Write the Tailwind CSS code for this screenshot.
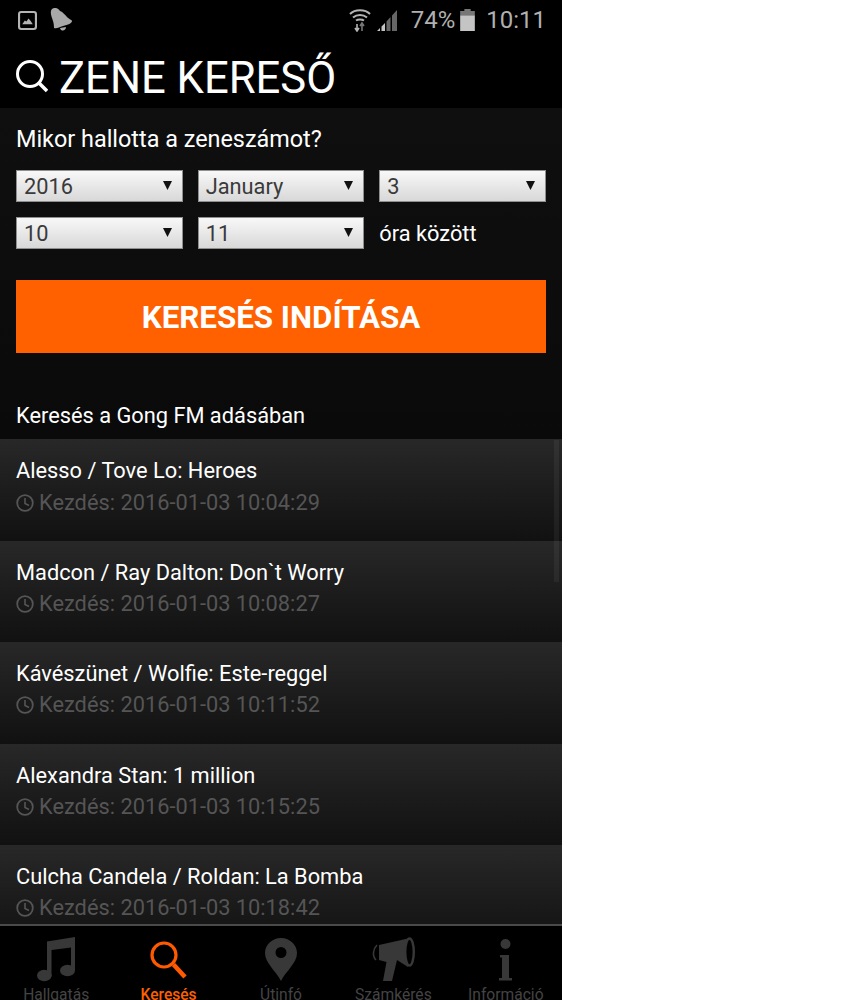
<!DOCTYPE html>
<html lang="en">
<head>
    <meta charset="UTF-8">
    <title>Zene kereső</title>
    <script src="https://cdn.jsdelivr.net/npm/@tailwindcss/browser@4"></script>
</head>
<body class="bg-white font-['Roboto',sans-serif]">
<div class="w-[562px] h-[1000px] bg-black flex flex-col overflow-hidden relative">

    <!-- Status bar -->
    <div class="h-[40px] flex items-center pl-[18px] pr-[16px] text-[#b0b0b0] shrink-0">
        <svg class="w-[19px] h-[19px]" viewBox="0 0 18 18"><rect x="1" y="1" width="16" height="16" rx="2" fill="none" stroke="#b4b4b4" stroke-width="2"/><path d="M4 12.5 L6.5 9 L8 10 L10 7 L12 9.5 L14 12.5 Z" fill="#b4b4b4"/></svg>
        <svg class="w-[24px] h-[24px] ml-[12px]" viewBox="0 0 24 24"><path d="M3 1 C6 -1 9 0 11 3 C14 4 16 7 18 9 C20 11 23 12 23 13 C23 15 19 17 14 18 C10 19 8 21 5 20 C5 15 4 13 3 10 C2 7 1 3 3 1 Z M11 20 C13 20 15 19 17 19 C17 23 12 24 11 20 Z" fill="#a8a8a8"/></svg>
        <div class="flex-1"></div>
        <svg class="w-[22px] h-[24px]" viewBox="0 0 22 24"><path d="M1 6 C6 1 16 1 21 6 M4 9.5 C8 6 14 6 18 9.5 M7 12.5 C9 11 13 11 15 12.5" fill="none" stroke="#b4b4b4" stroke-width="2"/><path d="M8 16 V22 M6 20 L8 23 L10 20" fill="none" stroke="#b4b4b4" stroke-width="1.6"/><path d="M13 23 V16 M11 18 L13 15 L15 18" fill="none" stroke="#777" stroke-width="1.6"/></svg>
        <svg class="w-[20px] h-[21px] ml-[6px] mt-[1px]" viewBox="0 0 20 21"><path d="M0 21 L3 18 V21 Z M4.500 21 V16.500 L8 13 V21 Z" fill="#c4c4c4"/><path d="M9.500 21 V11.500 L13.500 7 V21 Z M15 21 V5.500 L20 0 V21 Z" fill="#666"/></svg>
        <span class="ml-[14px] text-[24px] leading-none">74%</span>
        <svg class="w-[15px] h-[22px] ml-[5px]" viewBox="0 0 14 21"><path d="M4 0 H10 V2 H14 V6 H0 V2 H4 Z" fill="#777"/><rect y="6" width="14" height="15" fill="#c4c4c4"/></svg>
        <span class="ml-[11px] text-[24px] leading-none">10:11</span>
    </div>

    <!-- Title -->
    <div class="h-[68px] flex items-center pl-[16px] pt-[9px] shrink-0">
        <svg class="w-[32px] h-[34px] mb-[3px]" viewBox="0 0 32 34"><circle cx="14" cy="14" r="12.5" fill="none" stroke="white" stroke-width="3"/><path d="M23 23 L31 31" stroke="white" stroke-width="3.5"/></svg>
        <h1 class="ml-[11px] text-[43.6px] leading-none text-white">ZENE KERESŐ</h1>
    </div>

    <!-- Search form -->
    <div class="bg-gradient-to-b from-[#0f0f0f] to-[#0a0a0a] px-[16px] h-[331px] shrink-0 text-white">
        <p class="pt-[17px] text-[23.4px] leading-[28px]">Mikor hallotta a zeneszámot?</p>
        <div class="mt-[17px] grid grid-cols-3 gap-x-[15px] gap-y-[15px] text-[21.8px] text-[#3a3a3a]">
            <div class="h-[32px] flex items-center justify-between pl-[7px] pr-[10px] pt-[2px] border border-[#8f8f8f] bg-gradient-to-b from-[#f8f8f8] to-[#d8d8d8]"><span>2016</span><svg class="w-[9px] h-[9px] mb-[3px]" viewBox="0 0 11 10" preserveAspectRatio="none"><path d="M0 0 H11 L5.5 10 Z" fill="#111"/></svg></div>
            <div class="h-[32px] flex items-center justify-between pl-[7px] pr-[10px] pt-[2px] border border-[#8f8f8f] bg-gradient-to-b from-[#f8f8f8] to-[#d8d8d8]"><span>January</span><svg class="w-[9px] h-[9px] mb-[3px]" viewBox="0 0 11 10" preserveAspectRatio="none"><path d="M0 0 H11 L5.5 10 Z" fill="#111"/></svg></div>
            <div class="h-[32px] flex items-center justify-between pl-[7px] pr-[10px] pt-[2px] border border-[#8f8f8f] bg-gradient-to-b from-[#f8f8f8] to-[#d8d8d8]"><span>3</span><svg class="w-[9px] h-[9px] mb-[3px]" viewBox="0 0 11 10" preserveAspectRatio="none"><path d="M0 0 H11 L5.5 10 Z" fill="#111"/></svg></div>
            <div class="h-[32px] flex items-center justify-between pl-[7px] pr-[10px] pt-[2px] border border-[#8f8f8f] bg-gradient-to-b from-[#f8f8f8] to-[#d8d8d8]"><span>10</span><svg class="w-[9px] h-[9px] mb-[3px]" viewBox="0 0 11 10" preserveAspectRatio="none"><path d="M0 0 H11 L5.5 10 Z" fill="#111"/></svg></div>
            <div class="h-[32px] flex items-center justify-between pl-[7px] pr-[10px] pt-[2px] border border-[#8f8f8f] bg-gradient-to-b from-[#f8f8f8] to-[#d8d8d8]"><span>11</span><svg class="w-[9px] h-[9px] mb-[3px]" viewBox="0 0 11 10" preserveAspectRatio="none"><path d="M0 0 H11 L5.5 10 Z" fill="#111"/></svg></div>
            <div class="h-[32px] flex items-center pt-[2px] text-white">óra között</div>
        </div>
        <div class="mt-[31px] h-[73px] pt-[4px] bg-[#ff6000] flex items-center justify-center text-[31.3px] font-bold">KERESÉS INDÍTÁSA</div>
        <p class="mt-[49px] text-[21.8px] leading-[28px]">Keresés a Gong FM adásában</p>
    </div>

    <!-- Results -->
    <div class="flex-1 overflow-hidden relative">
        <div class="h-[102px] pl-[16px] pt-[18px] bg-gradient-to-b from-[#282828] to-[#111]">
            <p class="text-[21.8px] leading-[28px] text-white">Alesso / Tove Lo: Heroes</p>
            <p class="mt-[4px] flex items-center text-[21.8px] leading-[28px] text-[#555]"><svg class="w-[18px] h-[18px] mr-[5px]" viewBox="0 0 18 18"><circle cx="9" cy="9" r="7.8" fill="none" stroke="#555" stroke-width="1.8"/><path d="M9 4 V9.5 L13 11.5" fill="none" stroke="#555" stroke-width="1.6"/></svg>Kezdés: 2016-01-03 10:04:29</p>
        </div>
        <div class="h-[101px] pl-[16px] pt-[18px] bg-gradient-to-b from-[#282828] to-[#111]">
            <p class="text-[21.8px] leading-[28px] text-white">Madcon / Ray Dalton: Don`t Worry</p>
            <p class="mt-[3px] flex items-center text-[21.8px] leading-[28px] text-[#555]"><svg class="w-[18px] h-[18px] mr-[5px]" viewBox="0 0 18 18"><circle cx="9" cy="9" r="7.8" fill="none" stroke="#555" stroke-width="1.8"/><path d="M9 4 V9.5 L13 11.5" fill="none" stroke="#555" stroke-width="1.6"/></svg>Kezdés: 2016-01-03 10:08:27</p>
        </div>
        <div class="h-[102px] pl-[16px] pt-[18px] bg-gradient-to-b from-[#282828] to-[#111]">
            <p class="text-[21.8px] leading-[28px] text-white">Kávészünet / Wolfie: Este-reggel</p>
            <p class="mt-[3px] flex items-center text-[21.8px] leading-[28px] text-[#555]"><svg class="w-[18px] h-[18px] mr-[5px]" viewBox="0 0 18 18"><circle cx="9" cy="9" r="7.8" fill="none" stroke="#555" stroke-width="1.8"/><path d="M9 4 V9.5 L13 11.5" fill="none" stroke="#555" stroke-width="1.6"/></svg>Kezdés: 2016-01-03 10:11:52</p>
        </div>
        <div class="h-[101px] pl-[16px] pt-[18px] bg-gradient-to-b from-[#282828] to-[#111]">
            <p class="text-[21.8px] leading-[28px] text-white">Alexandra Stan: 1 million</p>
            <p class="mt-[3px] flex items-center text-[21.8px] leading-[28px] text-[#555]"><svg class="w-[18px] h-[18px] mr-[5px]" viewBox="0 0 18 18"><circle cx="9" cy="9" r="7.8" fill="none" stroke="#555" stroke-width="1.8"/><path d="M9 4 V9.5 L13 11.5" fill="none" stroke="#555" stroke-width="1.6"/></svg>Kezdés: 2016-01-03 10:15:25</p>
        </div>
        <div class="h-[102px] pl-[16px] pt-[18px] bg-gradient-to-b from-[#282828] to-[#111]">
            <p class="text-[21.8px] leading-[28px] text-white">Culcha Candela / Roldan: La Bomba</p>
            <p class="mt-[3px] flex items-center text-[21.8px] leading-[28px] text-[#555]"><svg class="w-[18px] h-[18px] mr-[5px]" viewBox="0 0 18 18"><circle cx="9" cy="9" r="7.8" fill="none" stroke="#555" stroke-width="1.8"/><path d="M9 4 V9.5 L13 11.5" fill="none" stroke="#555" stroke-width="1.6"/></svg>Kezdés: 2016-01-03 10:18:42</p>
        </div>
        <div class="absolute right-[3px] top-[1px] w-[5px] h-[142px] bg-white/5"></div>
    </div>

    <!-- Bottom nav -->
    <div class="h-[76px] shrink-0 bg-black border-t-2 border-[#4a4a4a] grid grid-cols-5 text-[15.6px] leading-none text-[#444] overflow-hidden">
        <div class="flex flex-col items-center pt-[11px]">
            <svg class="w-[38px] h-[45px]" viewBox="0 0 38 45"><path d="M10 4.500 L38 0 V33 H34 V10.500 L14.500 13 V39.500 H10 Z" fill="#383838"/><ellipse cx="30.500" cy="33.500" rx="7.500" ry="5.700" fill="#383838"/><ellipse cx="7.300" cy="38.500" rx="7.300" ry="5.700" fill="#383838"/></svg>
            <span class="mt-[6px]">Hallgatás</span>
        </div>
        <div class="flex flex-col items-center pt-[11px] text-[#ff6000] font-medium">
            <svg class="w-[37px] h-[45px]" viewBox="0 0 37 45"><circle cx="14" cy="18" r="12" fill="none" stroke="#ff5a00" stroke-width="3.2"/><path d="M23.500 27.500 L35 40" stroke="#ff5a00" stroke-width="4.500"/></svg>
            <span class="mt-[6px]">Keresés</span>
        </div>
        <div class="flex flex-col items-center pt-[11px]">
            <svg class="w-[32px] h-[45px]" viewBox="0 0 32 45"><path fill-rule="evenodd" d="M16 1 C25 1 32 8 32 16 C32 26 21 34 16 44 C11 34 0 26 0 16 C0 8 7 1 16 1 Z M16 10 A5.500 5.500 0 1 0 16 21 A5.500 5.500 0 1 0 16 10 Z" fill="#383838"/></svg>
            <span class="mt-[6px]">Útinfó</span>
        </div>
        <div class="flex flex-col items-center pt-[11px]">
            <svg class="w-[43px] h-[45px]" viewBox="0 0 43 45"><path d="M7 8 L36 1.500 V30 L25 23 L20 44 H11 L14.500 25 L7 23 Z" fill="#383838"/><ellipse cx="37.500" cy="15" rx="4.300" ry="13.500" fill="#000" stroke="#383838" stroke-width="2.400"/><path d="M5 8 C1 12 0 19 4 23" fill="none" stroke="#383838" stroke-width="1.600"/></svg>
            <span class="mt-[6px]">Számkérés</span>
        </div>
        <div class="flex flex-col items-center pt-[11px]">
            <svg class="w-[13px] h-[45px]" viewBox="0 0 13 45"><circle cx="6.500" cy="7" r="5" fill="#383838"/><path d="M1 18 H10 V41 H13 V43.500 H0 V41 H3 V20.500 H1 Z" fill="#383838"/></svg>
            <span class="mt-[6px]">Információ</span>
        </div>
    </div>
</div>
</body>
</html>
